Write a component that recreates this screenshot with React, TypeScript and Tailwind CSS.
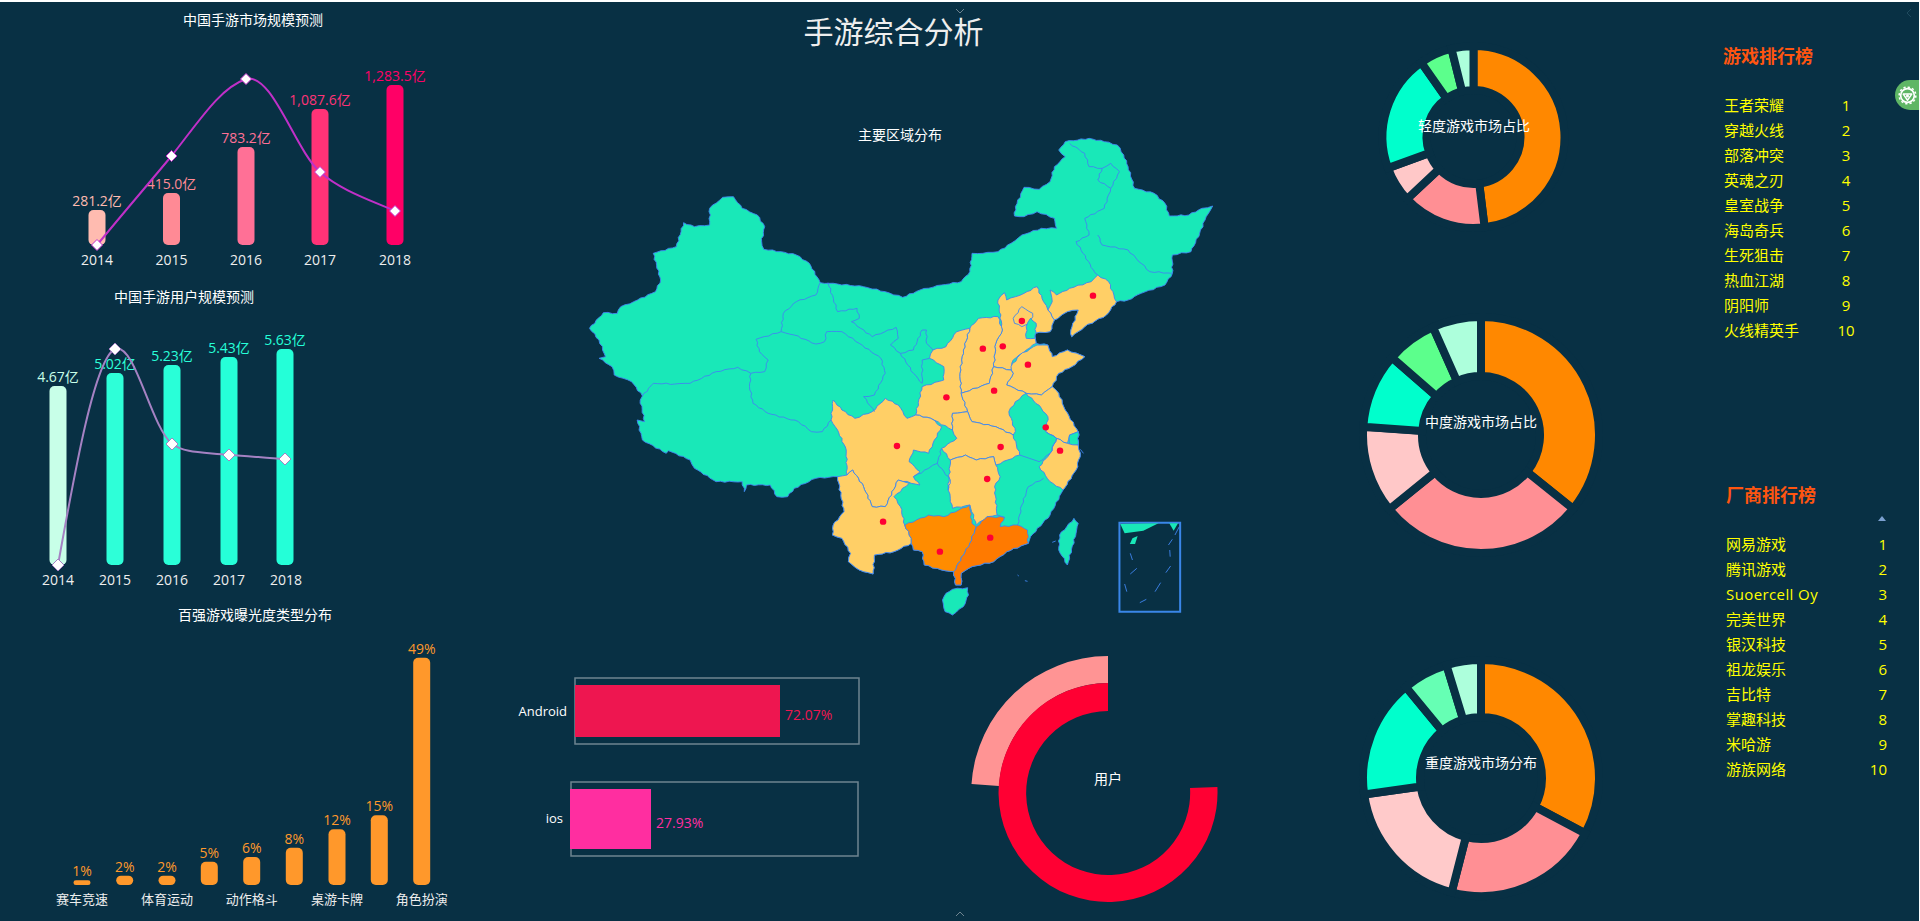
import React from "react";

const BG = "#083044";
const FONT = "font-['Open_Sans','Noto_Sans_CJK_SC',sans-serif]";
const LINE = "#3f86f0";

type Pt = [number, number];

// adds a little deterministic noise to an outline so the map edge looks traced, not polygonal
// the noise depends only on the edge, so two regions sharing an edge get the same wobble
function rough(pts: Pt[], closed = true) {
  const out: Pt[] = [];
  const n = pts.length;
  for (let i = 0; i < (closed ? n : n - 1); i++) {
    const a = pts[i];
    const b = pts[(i + 1) % n];
    out.push(a);
    const len = Math.hypot(b[0] - a[0], b[1] - a[1]);
    const steps = Math.floor(len / 9);
    const seed = a[0] + b[0] + (a[1] + b[1]) * 1.7;
    const sign = a[0] + a[1] * 0.5 < b[0] + b[1] * 0.5 ? 1 : -1;
    for (let s = 1; s < steps; s++) {
      const t = s / steps;
      const k = sign > 0 ? s : steps - s;
      const off = Math.sin(seed + k * 2.4) * 1.8 * sign;
      const x = a[0] + (b[0] - a[0]) * t;
      const y = a[1] + (b[1] - a[1]) * t;
      out.push([x + (-(b[1] - a[1]) / len) * off, y + ((b[0] - a[0]) / len) * off]);
    }
  }
  return out.map((p) => p[0].toFixed(1) + "," + p[1].toFixed(1)).join(" ");
}

const outline: Pt[] = [
  [375, 262], [400, 260], [420, 295], [455, 315], [472, 350], [465, 395], [470, 418], [510, 425], [545, 435], [575, 460], [600, 518],
  [640, 522], [700, 530], [750, 545], [790, 562], [830, 540], [880, 525], [925, 515], [945, 485], [950, 430], [975, 430], [1010, 425],
  [1040, 400], [1065, 375], [1110, 355], [1145, 355], [1140, 325], [1100, 305], [1070, 320], [1048, 318], [1050, 290], [1070, 232],
  [1105, 238], [1130, 215], [1140, 170], [1165, 140], [1150, 120], [1165, 95], [1220, 85], [1255, 95], [1285, 105], [1300, 135],
  [1310, 170], [1325, 235], [1370, 250], [1395, 280], [1405, 318], [1450, 315], [1480, 295], [1505, 288], [1490, 320], [1475, 370],
  [1455, 425], [1412, 435], [1412, 490], [1395, 525], [1340, 550], [1310, 570], [1283, 575], [1260, 615], [1210, 650], [1180, 680],
  [1178, 660], [1195, 600], [1170, 605], [1140, 630], [1130, 665], [1095, 670], [1098, 700], [1125, 705], [1135, 740], [1170, 720],
  [1210, 740], [1180, 770], [1150, 790], [1135, 830], [1150, 850], [1165, 900], [1195, 965], [1195, 1005], [1200, 1030], [1190, 1080],
  [1160, 1140], [1130, 1215], [1085, 1280], [1080, 1300], [1030, 1325], [1000, 1355], [950, 1370], [925, 1390], [925, 1425], [912, 1425],
  [908, 1385], [880, 1380], [840, 1365], [835, 1325], [815, 1320], [810, 1300], [770, 1325], [725, 1335], [722, 1392], [690, 1380],
  [665, 1355], [670, 1330], [650, 1285], [628, 1275], [630, 1245], [655, 1205], [640, 1100], [590, 1105], [540, 1135], [525, 1160],
  [500, 1160], [485, 1125], [430, 1125], [425, 1145], [420, 1115], [360, 1115], [310, 1075], [300, 1050], [250, 1022], [245, 1030],
  [190, 990], [178, 930], [195, 935], [185, 870], [190, 858], [165, 815], [125, 795], [120, 770], [90, 745], [105, 740], [90, 690],
  [68, 655], [100, 608], [132, 610], [140, 590], [170, 575], [220, 545], [232, 510], [215, 430], [268, 410], [285, 338], [310, 350],
  [345, 345], [345, 295],
];

const regions: { fill: string; pts: Pt[] }[] = [
  // liaoning
  { fill: "#ffcf66", pts: [[1240, 495], [1265, 515], [1283, 575], [1260, 615], [1210, 650], [1180, 680], [1178, 660], [1195, 600], [1170, 605], [1140, 630], [1125, 600], [1135, 575], [1130, 540], [1145, 555], [1175, 535], [1225, 515]] },
  // hebei
  { fill: "#ffcf66", pts: [[1025, 548], [1030, 570], [1070, 550], [1100, 530], [1115, 575], [1125, 600], [1140, 630], [1130, 665], [1095, 670], [1098, 700], [1075, 720], [1045, 750], [1040, 780], [1000, 770], [1005, 700], [1020, 660], [1010, 570]] },
  // beijing
  { fill: "#ffcf66", pts: [[1045, 625], [1065, 590], [1090, 610], [1085, 640], [1065, 650], [1048, 640]] },
  // tianjin
  { fill: "#19e8b8", pts: [[1085, 625], [1098, 640], [1095, 685], [1075, 685], [1075, 650]] },
  // shanxi
  { fill: "#ffcf66", pts: [[965, 625], [1010, 620], [1020, 660], [1005, 700], [1000, 770], [990, 820], [925, 850], [922, 790], [930, 720], [945, 655]] },
  // shaanxi
  { fill: "#ffcf66", pts: [[945, 655], [930, 720], [922, 790], [925, 850], [940, 905], [905, 910], [905, 960], [855, 925], [820, 915], [835, 830], [885, 810], [885, 770], [852, 745], [860, 720], [890, 710], [915, 665]] },
  // shandong
  { fill: "#ffcf66", pts: [[1100, 705], [1125, 705], [1135, 740], [1170, 720], [1210, 740], [1180, 770], [1150, 790], [1135, 830], [1110, 855], [1075, 850], [1030, 825], [1045, 790], [1040, 770], [1060, 735]] },
  // henan
  { fill: "#ffcf66", pts: [[1000, 770], [1040, 780], [1045, 790], [1030, 825], [1075, 850], [1050, 875], [1035, 905], [1050, 965], [1045, 975], [1005, 950], [950, 935], [940, 905], [925, 850], [990, 820]] },
  // hubei
  { fill: "#ffcf66", pts: [[905, 910], [940, 905], [950, 935], [1005, 950], [1045, 975], [1060, 1035], [1005, 1065], [1000, 1040], [960, 1050], [935, 1035], [900, 1050], [880, 1015], [915, 985], [905, 960]] },
  // hunan
  { fill: "#ffcf66", pts: [[900, 1050], [935, 1035], [960, 1050], [1000, 1040], [1005, 1065], [1015, 1100], [1002, 1130], [1008, 1215], [985, 1220], [960, 1245], [945, 1185], [905, 1195], [900, 1165], [895, 1140]] },
  // jiangsu
  { fill: "#ffcf66", pts: [[1075, 850], [1110, 855], [1135, 830], [1150, 850], [1165, 900], [1195, 965], [1175, 975], [1170, 1000], [1145, 985], [1120, 965], [1125, 920], [1110, 895]] },
  // shanghai
  { fill: "#19e8b8", pts: [[1175, 975], [1195, 965], [1195, 1005], [1175, 1005]] },
  // zhejiang
  { fill: "#ffcf66", pts: [[1145, 985], [1170, 1000], [1195, 1005], [1200, 1030], [1190, 1080], [1160, 1140], [1130, 1115], [1105, 1070], [1130, 1030]] },
  // sichuan
  { fill: "#ffcf66", pts: [[625, 930], [630, 870], [650, 900], [680, 925], [720, 905], [750, 865], [780, 885], [800, 925], [820, 915], [855, 925], [880, 950], [860, 1000], [850, 1030], [815, 1020], [805, 1055], [830, 1085], [815, 1100], [830, 1125], [780, 1110], [750, 1190], [720, 1190], [700, 1130], [675, 1080], [662, 1095], [660, 1020], [640, 960]] },
  // yunnan
  { fill: "#ffcf66", pts: [[640, 1100], [662, 1095], [675, 1080], [700, 1130], [720, 1190], [750, 1190], [780, 1110], [805, 1120], [770, 1160], [785, 1190], [795, 1245], [810, 1285], [810, 1300], [770, 1325], [725, 1335], [722, 1392], [690, 1380], [665, 1355], [670, 1330], [650, 1285], [628, 1275], [630, 1245], [655, 1205]] },
  // guangxi
  { fill: "#ff8c00", pts: [[795, 1245], [850, 1215], [885, 1220], [945, 1185], [950, 1240], [960, 1250], [945, 1300], [908, 1385], [880, 1380], [840, 1365], [835, 1325], [815, 1320], [810, 1300], [810, 1285]] },
  // guangdong
  { fill: "#ff7a00", pts: [[960, 1250], [985, 1220], [1025, 1222], [1015, 1250], [1055, 1245], [1078, 1260], [1080, 1300], [1030, 1325], [1000, 1355], [950, 1370], [925, 1390], [925, 1425], [912, 1425], [908, 1385], [945, 1300]] },
  // hainan
  { fill: "#19e8b8", pts: [[882, 1470], [890, 1450], [905, 1438], [940, 1433], [942, 1455], [930, 1490], [905, 1515], [888, 1505]] },
  // taiwan
  { fill: "#19e8b8", pts: [[1185, 1225], [1195, 1240], [1190, 1270], [1170, 1365], [1150, 1320], [1152, 1275]] },
];

const borders: Pt[][] = [
  [[600, 518], [590, 555], [545, 575], [515, 610], [510, 665], [452, 688], [460, 725], [480, 750], [472, 785], [440, 790], [410, 772], [360, 785], [300, 820], [265, 822], [215, 820], [190, 858]],
  [[440, 790], [437, 830], [445, 880], [480, 910], [550, 935], [580, 965], [605, 965], [625, 930]],
  [[510, 665], [540, 675], [590, 702], [610, 695], [615, 665], [650, 665], [690, 700], [740, 745], [750, 790], [725, 855], [700, 860], [725, 905]],
  [[618, 518], [640, 605], [685, 595], [690, 625], [672, 635], [720, 680], [775, 652], [780, 685], [762, 705], [785, 730], [815, 720], [835, 660], [845, 660], [845, 700], [860, 720]],
  [[785, 730], [815, 790], [835, 820], [835, 750], [852, 745]],
  [[1175, 100], [1210, 130], [1220, 170], [1250, 175], [1270, 160], [1290, 185], [1270, 235], [1255, 295], [1210, 325], [1220, 375], [1190, 395], [1230, 480], [1240, 495]],
  [[1240, 375], [1250, 405], [1310, 420], [1340, 460], [1360, 485], [1412, 490]],
  [[1250, 175], [1240, 210], [1270, 235]],
  [[880, 1015], [870, 1060], [900, 1110], [895, 1140]],
  [[815, 1100], [850, 1075], [870, 1060]],
  [[1060, 1035], [1105, 1055]],
  [[1115, 1105], [1080, 1130], [1065, 1185], [1055, 1245]],
  [[1008, 1215], [1025, 1222]],
  [[1120, 965], [1145, 985], [1130, 1030], [1105, 1055]],
  // south sea dashes and small islands
  [[1428, 1250], [1418, 1275]],
  [[1412, 1288], [1403, 1305]],
  [[1406, 1320], [1407, 1340]],
  [[1408, 1368], [1397, 1388]],
  [[1385, 1418], [1372, 1445]],
  [[1352, 1468], [1337, 1478]],
  [[1302, 1422], [1307, 1445]],
  [[1315, 1330], [1320, 1350]],
  [[1330, 1375], [1315, 1392]],
  [[1135, 1297], [1143, 1293]],
  [[1055, 1395], [1058, 1398]],
  [[1072, 1412], [1078, 1414]],
  [[1200, 1018], [1207, 1030]],
];

const dots: Pt[] = [
  [1229, 557], [1065, 633], [1021, 709], [975, 716], [1079, 764], [1001, 842], [891, 862], [1120, 952],
  [1016, 1011], [1153, 1022], [777, 1008], [985, 1107], [745, 1235], [992, 1283], [876, 1325],
];

function ChinaMap() {
  return (
    <svg viewBox="560 110 680 520" className="ml-[60px] block h-[520px] w-[680px]">
      <text x={900} y={136} dy={-1.5} textAnchor="middle" dominantBaseline="central" fontSize={14} fill="#ffffff">
        主要区域分布
      </text>
      {/* traced against the crop, so x and y have different scales */}
      <svg x={560} y={110} width={680} height={520} viewBox="0 0 1568 1560" preserveAspectRatio="none">
        <polygon points={rough(outline)} fill="#19e8b8" stroke={LINE} strokeWidth={0.9} vectorEffect="non-scaling-stroke" />
        {regions.map((r, i) => (
          <polygon key={i} points={rough(r.pts)} fill={r.fill} stroke={LINE} strokeWidth={0.9} vectorEffect="non-scaling-stroke" />
        ))}
        {borders.map((b, i) => (
          <polyline key={i} points={b.length > 2 ? rough(b, false) + " " + b[b.length - 1].join(",") : b.map((p) => p.join(",")).join(" ")} fill="none" stroke={LINE} strokeWidth={0.9} vectorEffect="non-scaling-stroke" />
        ))}
        <rect x={1290} y={1238} width={140} height={267} fill="none" stroke="#3a86e8" strokeWidth={2} vectorEffect="non-scaling-stroke" />
        <polygon points="1292,1242 1380,1240 1345,1262 1302,1270" fill="#19e8b8" />
        <polygon points="1405,1240 1425,1240 1415,1262" fill="#19e8b8" />
        <polygon points="1320,1285 1332,1278 1326,1302 1314,1302" fill="#19e8b8" />
        {dots.map((d, i) => (
          <ellipse key={i} cx={d[0]} cy={d[1]} rx={7.5} ry={9.5} fill="#ff0033" />
        ))}
      </svg>
    </svg>
  );
}

type Bar = { x: number; top: number; color: string; label: string };

function Bars({ bars, bottom, width = 17 }: { bars: Bar[]; bottom: number; width?: number }) {
  return (
    <>
      {bars.map((b) => (
        <g key={b.x}>
          <rect x={b.x - width / 2} y={b.top} width={width} height={bottom - b.top} rx={Math.min(5, (bottom - b.top) / 2)} fill={b.color} />
          <text x={b.x} y={b.top - 4} textAnchor="middle" fontSize={14} fill={b.color}>
            {b.label}
          </text>
        </g>
      ))}
    </>
  );
}

function Diamonds({ pts, r, stroke }: { pts: Pt[]; r: number; stroke: string }) {
  return (
    <>
      {pts.map((p) => (
        <polygon
          key={p[0]}
          points={`${p[0]},${p[1] - r} ${p[0] + r},${p[1]} ${p[0]},${p[1] + r} ${p[0] - r},${p[1]}`}
          fill="#ffffff"
          stroke={stroke}
          strokeWidth={1}
        />
      ))}
    </>
  );
}

function AxisLabels({ items, y, size = 14 }: { items: [number, string][]; y: number; size?: number }) {
  return (
    <>
      {items.map(([x, t]) => (
        <text key={t} x={x} y={y} dy={-1} textAnchor="middle" dominantBaseline="central" fontSize={size} fill="#eeeeee">
          {t}
        </text>
      ))}
    </>
  );
}

function ChartTitle({ x, y, children }: { x: number; y: number; children: string }) {
  return (
    <text x={x} y={y} dy={-1.5} textAnchor="middle" dominantBaseline="central" fontSize={14} fill="#ffffff">
      {children}
    </text>
  );
}

function MarketChart() {
  const pts: Pt[] = [[97, 245], [171.5, 156], [246, 79], [320, 172], [395, 211]];
  return (
    <svg viewBox="0 2 500 278" className="block h-[278px] w-[500px]">
      <ChartTitle x={253} y={21}>中国手游市场规模预测</ChartTitle>
      <Bars
        bottom={245}
        bars={[
          { x: 97, top: 210, color: "#ffbbb0", label: "281.2亿" },
          { x: 171.5, top: 193, color: "#ff8a95", label: "415.0亿" },
          { x: 246, top: 147, color: "#ff7096", label: "783.2亿" },
          { x: 320, top: 109, color: "#ff3377", label: "1,087.6亿" },
          { x: 395, top: 85, color: "#ff0066", label: "1,283.5亿" },
        ]}
      />
      <AxisLabels y={260} items={[[97, "2014"], [171.5, "2015"], [246, "2016"], [320, "2017"], [395, "2018"]]} />
      <path d="M97,245 C130,205 150,182 171.5,156 C200,120 220,88 246,79 C272,72 295,150 320,172 C340,190 370,200 395,211" fill="none" stroke="#c030c8" strokeWidth={2} />
      <Diamonds pts={pts} r={5.5} stroke="#c030c8" />
    </svg>
  );
}

function UsersChart() {
  const pts: Pt[] = [[58, 565], [115, 349], [172, 444], [229, 455], [285, 459]];
  return (
    <svg viewBox="0 280 500 320" className="block h-[320px] w-[500px]">
      <ChartTitle x={184} y={298}>中国手游用户规模预测</ChartTitle>
      <Bars
        bottom={565}
        bars={[
          { x: 58, top: 386, color: "#c8ffe8", label: "4.67亿" },
          { x: 115, top: 373, color: "#2effd8", label: "5.02亿" },
          { x: 172, top: 365, color: "#29ffd8", label: "5.23亿" },
          { x: 229, top: 357, color: "#26ffd8", label: "5.43亿" },
          { x: 285, top: 349, color: "#24ffd8", label: "5.63亿" },
        ]}
      />
      <AxisLabels y={580} items={[[58, "2014"], [115, "2015"], [172, "2016"], [229, "2017"], [286, "2018"]]} />
      <path d="M58,565 C75,470 95,358 115,349 C135,342 150,425 172,444 C185,453 200,452 229,455 C250,456 265,458 285,459" fill="none" stroke="#a582c3" strokeWidth={2} />
      <Diamonds pts={pts} r={6} stroke="#a582c3" />
    </svg>
  );
}

function ExposureChart() {
  const orange = "#ff982b";
  const bars: Bar[] = [
    { x: 82, top: 880.3, color: orange, label: "1%" },
    { x: 124.7, top: 875.7, color: orange, label: "2%" },
    { x: 167, top: 875.7, color: orange, label: "2%" },
    { x: 209.3, top: 861.7, color: orange, label: "5%" },
    { x: 251.7, top: 857, color: orange, label: "6%" },
    { x: 294.3, top: 847.7, color: orange, label: "8%" },
    { x: 337, top: 829.3, color: orange, label: "12%" },
    { x: 379.3, top: 815.3, color: orange, label: "15%" },
    { x: 421.7, top: 657.7, color: orange, label: "49%" },
  ];
  return (
    <svg viewBox="0 600 500 321" className="block h-[321px] w-[500px]">
      <ChartTitle x={255} y={616}>百强游戏曝光度类型分布</ChartTitle>
      <Bars bottom={885} bars={bars} />
      <AxisLabels y={900} size={13} items={[[82, "赛车竞速"], [167, "体育运动"], [251.7, "动作格斗"], [337, "桌游卡牌"], [421.7, "角色扮演"]]} />
    </svg>
  );
}

function PlatformChart() {
  return (
    <svg viewBox="500 630 840 291" className="block h-[291px] w-[840px]">
      <rect x={575} y={678} width={284} height={66} fill="none" stroke="#6e8490" strokeWidth={1.5} />
      <rect x={575} y={685} width={205} height={52} fill="#ee1650" />
      <text x={567} y={711} textAnchor="end" dominantBaseline="central" fontSize={13} fill="#ffffff">Android</text>
      <text x={785} y={714} dominantBaseline="central" fontSize={14} fill="#ee1650">72.07%</text>

      <rect x={571} y={782} width={287} height={74} fill="none" stroke="#6e8490" strokeWidth={1.5} />
      <rect x={570} y={789} width={81} height={60} fill="#ff2ea0" />
      <text x={563} y={818} textAnchor="end" dominantBaseline="central" fontSize={13} fill="#ffffff">ios</text>
      <text x={656} y={822} dominantBaseline="central" fontSize={14} fill="#ff2ea0">27.93%</text>

      {/* user ring */}
      <path d="M1108,656 A137,137 0 0 0 971.5,784 L999,786 A109.5,109.5 0 0 1 1108,683 Z" fill="#ff9494" />
      <path d="M1108,683 A109.5,109.5 0 1 0 1217.4,787 L1190,788 A82,82 0 1 1 1108,711 Z" fill="#ff0033" />
      <text x={1108} y={778} textAnchor="middle" dominantBaseline="central" fontSize={14} fill="#ffffff">用户</text>
    </svg>
  );
}

function polar(cx: number, cy: number, r: number, deg: number): string {
  const a = (deg * Math.PI) / 180;
  return (cx + r * Math.sin(a)).toFixed(2) + "," + (cy - r * Math.cos(a)).toFixed(2);
}

function Donut({ cx, cy, R, r, stops, colors, title, titleX, titleY, viewY, height }: {
  cx: number;
  cy: number;
  R: number;
  r: number;
  stops: number[];
  colors: string[];
  title: string;
  titleX: number;
  titleY: number;
  viewY: number;
  height: number;
}) {
  // background stroke eats 4px on each side, so the path is drawn that much larger
  const ro = R + 4;
  const ri = r - 4;
  return (
    <svg viewBox={`1340 ${viewY} 300 ${height}`} style={{ height }} className="block w-[300px]">
      {colors.map((c, i) => {
        const a = i === 0 ? 0 : stops[i - 1];
        const b = stops[i];
        const large = b - a > 180 ? 1 : 0;
        return (
          <path
            key={c + i}
            d={`M${polar(cx, cy, ro, a)} A${ro},${ro} 0 ${large} 1 ${polar(cx, cy, ro, b)} L${polar(cx, cy, ri, b)} A${ri},${ri} 0 ${large} 0 ${polar(cx, cy, ri, a)} Z`}
            fill={c}
            stroke={BG}
            strokeWidth={8}
          />
        );
      })}
      <text x={titleX} y={titleY} dy={-1.5} textAnchor="middle" dominantBaseline="central" fontSize={14} fill="#ffffff">
        {title}
      </text>
    </svg>
  );
}

const games = ["王者荣耀", "穿越火线", "部落冲突", "英魂之刃", "皇室战争", "海岛奇兵", "生死狙击", "热血江湖", "阴阳师", "火线精英手"];
const vendors = ["网易游戏", "腾讯游戏", "Suoercell Oy", "完美世界", "银汉科技", "祖龙娱乐", "吉比特", "掌趣科技", "米哈游", "游族网络"];

function GearIcon() {
  return (
    <svg viewBox="0 0 20 20" className="h-[19px] w-[19px]">
      <circle cx={10} cy={10} r={7.2} fill="none" stroke="#ffffff" strokeWidth={1.8} />
      <circle cx={10} cy={10} r={8.8} fill="none" stroke="#ffffff" strokeWidth={1.6} strokeDasharray="2.4 2.2" />
      <path d="M5.5 8.5h9L10 15z" fill="none" stroke="#ffffff" strokeWidth={1.5} strokeLinejoin="round" />
      <circle cx={10} cy={10.4} r={1.6} fill="#ffffff" />
    </svg>
  );
}

function Chevron({ up, className }: { up?: boolean; className: string }) {
  return (
    <svg viewBox="0 0 10 6" className={`absolute h-[6px] w-[10px] ${className}`}>
      <polyline points={up ? "1,5 5,1 9,5" : "1,1 5,5 9,1"} fill="none" stroke="#6e8490" strokeWidth={1} />
    </svg>
  );
}

export default function App() {
  return (
    <div className={`relative flex h-[921px] w-[1920px] overflow-hidden border-t-2 border-r border-white bg-[#083044] ${FONT}`}>
      <Chevron className="top-[6px] left-[955px]" />
      <Chevron up className="top-[909px] left-[955px]" />

      {/* left charts */}
      <div className="flex w-[500px] shrink-0 flex-col">
        <MarketChart />
        <UsersChart />
        <ExposureChart />
      </div>

      {/* title, map, platform */}
      <div className="flex w-[840px] shrink-0 flex-col">
        <div className="flex h-[108px] justify-center pt-[9px] pr-[53px]">
          <h1 className="text-[30px] leading-[42px] font-normal text-[#eeeeee]">手游综合分析</h1>
        </div>
        <ChinaMap />
        <PlatformChart />
      </div>

      {/* market share donuts */}
      <div className="flex w-[300px] shrink-0 flex-col">
        <Donut
          viewY={2}
          height={298}
          cx={1473.5}
          cy={137}
          R={87}
          r={51}
          stops={[173, 227, 250, 325, 346, 360]}
          colors={["#ff8800", "#ff8f94", "#ffc8c8", "#00ffcc", "#5cff8c", "#adffdc"]}
          title="轻度游戏市场占比"
          titleX={1474}
          titleY={127}
        />
        <Donut
          viewY={300}
          height={340}
          cx={1481}
          cy={435}
          R={114}
          r={63}
          stops={[128.7, 231, 274, 311, 336, 360]}
          colors={["#ff8800", "#ff8f94", "#ffc8c8", "#00ffcc", "#5cff8c", "#adffdc"]}
          title="中度游戏市场占比"
          titleX={1481}
          titleY={423}
        />
        <Donut
          viewY={640}
          height={281}
          cx={1481}
          cy={778}
          R={114}
          r={65}
          stops={[118, 194.4, 262, 320.5, 343, 360]}
          colors={["#ff8800", "#ff8f94", "#ffcaca", "#00ffcc", "#66ffb4", "#adffdc"]}
          title="重度游戏市场分布"
          titleX={1481}
          titleY={764}
        />
      </div>

      {/* rankings */}
      <div className="flex flex-col">
        <div className="mt-[40px] ml-[83px]">
          <h2 className="mb-[23px] text-[18px] leading-[28px] font-bold text-[#ff5510]">游戏排行榜</h2>
          {games.map((g, i) => (
            <div key={g} className="flex h-[25px] items-center text-[15px] text-[#ffff00]">
              <span className="ml-[1px] w-[100px]">{g}</span>
              <span className="w-[44px] text-center">{i + 1}</span>
            </div>
          ))}
        </div>
        <div className="relative mt-[138px] ml-[86px]">
          <h2 className="mb-[23px] text-[18px] leading-[28px] font-bold text-[#ff5510]">厂商排行榜</h2>
          <span className="absolute top-[35px] left-[152px] h-0 w-0 border-x-[4.5px] border-b-[5px] border-x-transparent border-b-[#7ba0d0]" />
          {vendors.map((v, i) => (
            <div key={v} className="flex h-[25px] w-[161px] items-center justify-between text-[15px] text-[#ffff00]">
              <span className={v === "Suoercell Oy" ? "tracking-[0.4px]" : ""}>{v}</span>
              <span>{i + 1}</span>
            </div>
          ))}
        </div>
      </div>

      {/* settings tab */}
      <div className="absolute top-[78px] right-0 flex h-[30px] w-[24px] items-center justify-center rounded-l-[15px] bg-[#5fb665]">
        <GearIcon />
      </div>
      <svg viewBox="0 0 6 10" className="absolute top-[6px] left-[1906px] h-[10px] w-[6px]">
        <polyline points="5,1 1,5 5,9" fill="none" stroke="#1f4a5e" strokeWidth={1} />
      </svg>
    </div>
  );
}
